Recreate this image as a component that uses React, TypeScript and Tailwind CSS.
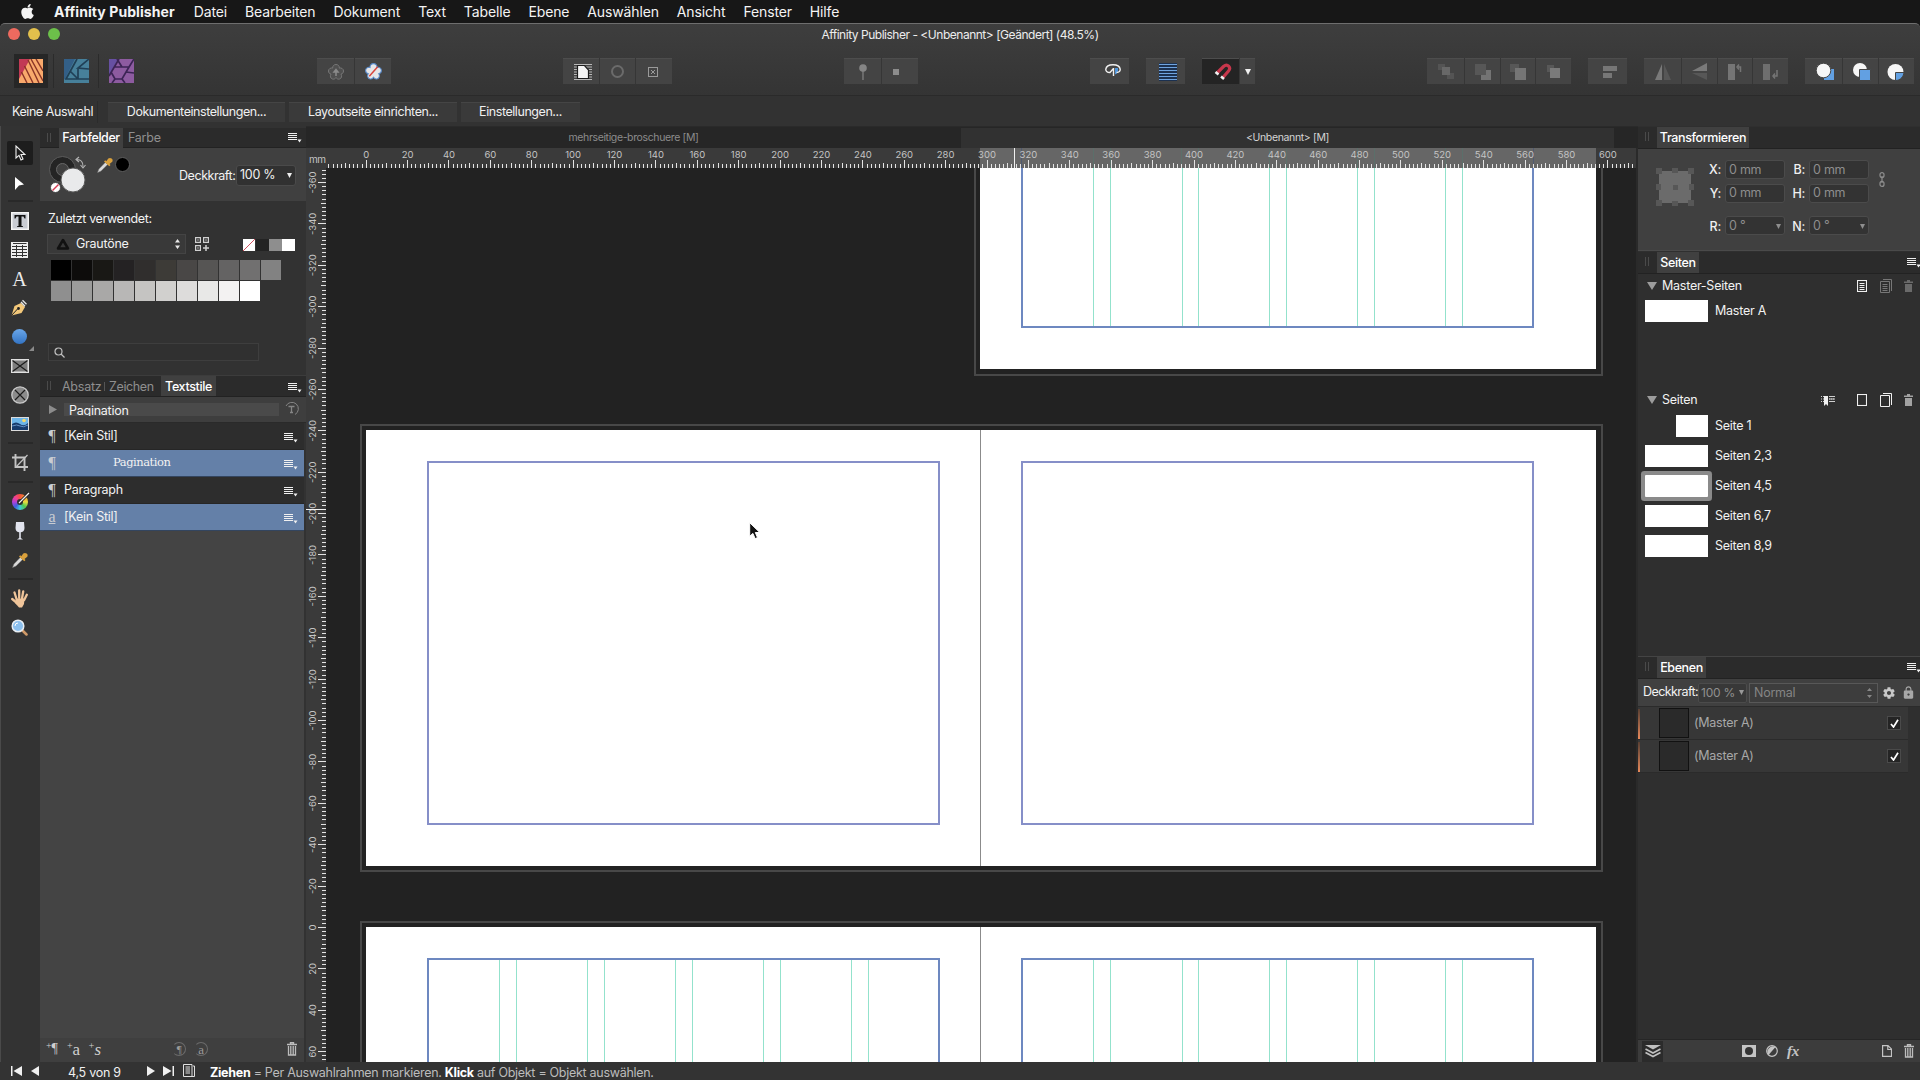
import type { ReactNode } from "react";
import { FaApple } from "react-icons/fa";
import { IoMdLock, IoMdSettings } from "react-icons/io";

const MENUS = ["Datei", "Bearbeiten", "Dokument", "Text", "Tabelle", "Ebene", "Auswählen", "Ansicht", "Fenster", "Hilfe"];

const GRAYS_TOP = ["#000000", "#0d0c0b", "#191815", "#242223", "#302e2d", "#3d3b37", "#494746", "#565554", "#646363", "#717070", "#828282"];
const GRAYS_BOTTOM = ["#8f8f8f", "#9c9c9b", "#a9a8a7", "#b8b7b6", "#c5c4c2", "#d1d0ce", "#dddcdb", "#e8e8e7", "#f3f2f2", "#ffffff"];

// px per 20 mm at the current zoom
const STEP = 41.39;

function MenuGlyph({ className = "" }: { className?: string }) {
  return (
    <svg className={className} width="14" height="11" viewBox="0 0 14 11">
      <path d="M0 1.5h9M0 3.5h9M0 5.5h9M0 7.5h9" stroke="#f0f0f0" />
      <path d="M9.5 7.5h4l-2 3z" fill="#f0f0f0" />
    </svg>
  );
}

function Grip() {
  return (
    <div className="ml-[7px] flex w-[12px] shrink-0 gap-[2px] self-start pt-[5px]">
      <div className="h-[9px] w-px bg-[#4a4a4a]" />
      <div className="h-[9px] w-px bg-[#4a4a4a]" />
    </div>
  );
}

function TrashGlyph({ color = "#bdbdbd" }: { color?: string }) {
  return (
    <svg width="10" height="14" viewBox="0 0 10 14" fill="none" stroke={color}>
      <path d="M0 2.5h10M3.5 2V.7h3V2" strokeWidth="1.4" />
      <path d="M1.5 4v9h7V4M3.8 4v8.5M6.2 4v8.5" strokeWidth="1.3" />
    </svg>
  );
}

function Dropper() {
  return (
    <svg width="16" height="16" viewBox="0 0 16 16">
      <path d="M.6 15.4 2 12l6.3-6.6 2.3 2.2L4 14z" fill="#d9d9d9" stroke="#8a8a8a" strokeWidth=".5" />
      <path d="m7 4.4 1.2-1.1 1.1.9 2-2.7Q13 .3 14.6 1.5t.7 3.2l-2.8 2.2 1 1.1-1.2 1.2z" fill="#d9a03c" />
    </svg>
  );
}

function ToolButton({ children, w, dark }: { children?: ReactNode; w: number; dark?: boolean }) {
  return (
    <div
      className={`flex h-[26px] items-center justify-center border-t border-[#4d4d4d] ${dark ? "bg-[#242424]" : "bg-[#444444]"}`}
      style={{ width: w }}
    >
      {children}
    </div>
  );
}

function ToolGroup({ children, ml }: { children: ReactNode; ml: number }) {
  return (
    <div className="flex shrink-0 gap-px bg-[#363636]" style={{ marginLeft: ml }}>
      {children}
    </div>
  );
}

function Personas() {
  return (
    <div className="flex w-[134px] shrink-0 items-center pl-[14px]">
      <div className="flex h-[34px] w-[34px] shrink-0 items-center justify-center bg-[#262626]">
        <svg width="24" height="24" viewBox="0 0 24 24">
          <rect width="24" height="24" fill="#f9a96c" />
          <path d="M0 0h11L0 20z" fill="#c23a55" />
          <path d="M9 1 20 24M5.5 7 14 24M2.5 13 8 24M12 0l12 22M17 0l7 12" stroke="#8a3526" strokeWidth="1.4" />
        </svg>
      </div>
      <div className="ml-[5px] h-[34px] w-px shrink-0 bg-[#2b2b2b]" />
      <svg className="ml-[10px] shrink-0" width="25" height="24" viewBox="0 0 25 24">
        <rect width="25" height="24" fill="#47809a" />
        <path d="M0 0h11L1 20H0z" fill="#335f87" />
        <path d="M13 0 2 20h23M6 12 14 20M25 0 14 9l11 1M14 9v11" stroke="#203f56" strokeWidth="1.7" fill="none" />
      </svg>
      <div className="ml-[9px] h-[34px] w-px shrink-0 bg-[#2b2b2b]" />
      <svg className="ml-[10px] shrink-0" width="25" height="24" viewBox="0 0 25 24">
        <rect width="25" height="24" fill="#8d5ba0" />
        <path d="M0 0h9L0 17z" fill="#6750a2" />
        <path d="M8 0l5 8M0 17 10 0M5 8h15L13 20H6L2 13M20 8l5-8M13 20l3 4M17 13l8 1M6 20l-3 4" stroke="#3c2455" strokeWidth="1.7" fill="none" />
      </svg>
    </div>
  );
}

function Cloud({ fill, stroke }: { fill: string; stroke: string }) {
  return (
    <path d="M10 1c2.300 0 3.600 1.800 3.300 3.600 2-.6 4.200.7 4.200 2.900 0 1.700-1 2.800-2.500 3.100 1.200 1.500.8 4.400-1.700 5-1.500.3-2.600-.4-3.300-1.600-.7 1.200-1.800 1.900-3.300 1.600-2.500-.6-2.900-3.500-1.700-5-1.500-.3-2.500-1.400-2.500-3.100 0-2.200 2.200-3.500 4.200-2.900C6.400 2.800 7.700 1 10 1z" fill={fill} stroke={stroke} />
  );
}

function Toolbar() {
  return (
    <div className="flex h-[52px] items-center border-b border-[#2a2a2a] pt-[3px]">
      <Personas />
      <ToolGroup ml={183}>
        <ToolButton w={37}>
          <svg width="20" height="20" viewBox="0 0 20 17">
            <Cloud fill="#505050" stroke="#777" />
            <path d="M10 12.500V7M8 8.500 10 6l2 2.500z" stroke="#8a8a8a" strokeWidth="1.500" />
          </svg>
        </ToolButton>
        <ToolButton w={36}>
          <svg width="21" height="21" viewBox="0 0 20 17">
            <Cloud fill="#e6e6e8" stroke="#5a8ccc" />
            <path d="M6 13 14 4" stroke="#d8443c" strokeWidth="1.400" />
          </svg>
        </ToolButton>
      </ToolGroup>
      <ToolGroup ml={172}>
        <ToolButton w={36}>
          <svg className="ml-[3px]" width="18" height="18" viewBox="0 0 18 18">
            <path d="M0 1.500h18M0 4h18M0 6.500h18M0 9h18M0 11.500h18M0 14h18M0 16.500h18" stroke="#b8b8b8" />
            <path d="M3.500 2.500h7l4 4.500v8.500h-11z" fill="#f4f4f4" stroke="#1c1c1c" strokeWidth="1.200" />
          </svg>
        </ToolButton>
        <ToolButton w={35}>
          <div className="h-[13px] w-[13px] rounded-full border-2 border-[#6b6b6b]" />
        </ToolButton>
        <ToolButton w={36}>
          <svg className="mr-[3px]" width="10" height="10" viewBox="0 0 10 10" fill="none" stroke="#9a9a9a">
            <rect x=".5" y=".5" width="9" height="9" />
            <path d="m3 3 4 4M7 3 3 7" />
          </svg>
        </ToolButton>
      </ToolGroup>
      <ToolGroup ml={172}>
        <ToolButton w={37}>
          <svg width="10" height="16" viewBox="0 0 10 16">
            <circle cx="5" cy="4" r="3.800" fill="#858585" />
            <path d="M5 7v9" stroke="#858585" strokeWidth="1.200" />
          </svg>
        </ToolButton>
        <ToolButton w={36}>
          <div className="mr-[8px] h-[6px] w-[6px] bg-[#8c8c8c]" />
        </ToolButton>
      </ToolGroup>
      <ToolGroup ml={172}>
        <ToolButton w={39}>
          <svg className="mb-[2px] ml-[6px]" width="16" height="13" viewBox="0 0 16 13" fill="none">
            <path d="M10 4v6.500c2.500-.5 3.500-3 3-6.500z" fill="#4c94dc" />
            <path d="M5 8.500C1.800 8.300.7 6.800.8 5.200 1.200 2.500 4 .8 8 .8s6.800 1.700 7.200 4.400c.1 1.600-1 3.100-3.700 3.300M4.500 9 8.500 4.500M8.500 4v8" stroke="#f0f0f0" strokeWidth="1.400" />
          </svg>
        </ToolButton>
      </ToolGroup>
      <ToolGroup ml={17}>
        <ToolButton w={39}>
          <svg className="ml-1" width="18" height="18" viewBox="0 0 18 18">
            <rect width="18" height="18" fill="#1c3150" />
            <path d="M0 1.500h18M0 4.500h18M0 7.500h18M0 10.500h18M0 13.500h18M0 16.500h18" stroke="#6fa4e0" strokeWidth="1.200" />
          </svg>
        </ToolButton>
      </ToolGroup>
      <ToolGroup ml={17}>
        <ToolButton w={37} dark>
          <svg className="ml-1" width="18" height="18" viewBox="0 0 18 18" fill="none">
            <path d="M3 10 9.500 3.500c4-3.500 8 1 5 4.500L8.500 15" stroke="#c7374c" strokeWidth="3.200" />
            <path d="m1.500 9 3 2.500M7 13.500l3 2.500" stroke="#f0f0f0" strokeWidth="2.500" />
          </svg>
        </ToolButton>
        <ToolButton w={15}>
          <svg width="6" height="6" viewBox="0 0 6 6">
            <path d="M0 0h6L3 6z" fill="#f0f0f0" />
          </svg>
        </ToolButton>
      </ToolGroup>
      <ToolGroup ml={172}>
        <ToolButton w={37}>
          <svg width="16" height="16" viewBox="0 0 16 16">
            <path d="M0 0h7v6H0zM9 9h7v6H9z" fill="#545454" />
            <path d="M4 3h8v8H4z" fill="#686868" />
          </svg>
        </ToolButton>
        <ToolButton w={35}>
          <svg width="16" height="16" viewBox="0 0 16 16">
            <path d="M6 6h10v10H6z" fill="#747474" />
            <path d="M0 0h11v11H0z" fill="#575757" />
          </svg>
        </ToolButton>
        <ToolButton w={34}>
          <svg width="16" height="16" viewBox="0 0 16 16">
            <path d="M0 0h9v8H0z" fill="#575757" />
            <path d="M5 4h11v12H5z" fill="#757575" />
          </svg>
        </ToolButton>
        <ToolButton w={35}>
          <svg width="14" height="14" viewBox="0 0 14 14">
            <path d="M0 0h7v7H0z" fill="#585858" />
            <path d="M3 3h10v10H3z" fill="#7a7a7a" />
          </svg>
        </ToolButton>
      </ToolGroup>
      <ToolGroup ml={17}>
        <ToolButton w={39}>
          <svg className="ml-1" width="14" height="14" viewBox="0 0 14 14" fill="#777">
            <path d="M0 1h14v5H0zM0 8h9v5H0z" />
          </svg>
        </ToolButton>
      </ToolGroup>
      <ToolGroup ml={17}>
        <ToolButton w={37}>
          <svg width="18" height="18" viewBox="0 0 18 18">
            <path d="M8 1v16H1z" fill="#7a7a7a" />
            <path d="M10 1v16h7z" fill="#575757" />
          </svg>
        </ToolButton>
        <ToolButton w={35}>
          <svg width="18" height="18" viewBox="0 0 18 18">
            <path d="M16 0v8H1z" fill="#7a7a7a" />
            <path d="M16 17v-7H1z" fill="#575757" />
          </svg>
        </ToolButton>
        <ToolButton w={34}>
          <svg width="16" height="18" viewBox="0 0 16 18">
            <path d="M1 1h7v16H1z" fill="#757575" />
            <path d="M13.500 9V4H11M12 1.500 10 4l2 2.500" stroke="#757575" strokeWidth="1.500" fill="none" />
          </svg>
        </ToolButton>
        <ToolButton w={35}>
          <svg width="16" height="18" viewBox="0 0 16 18">
            <path d="M0 1h7v16H0z" fill="#6e6e6e" />
            <path d="M14 7v6h-3M12 10.500 10 13l2 2.500" stroke="#757575" strokeWidth="1.500" fill="none" />
          </svg>
        </ToolButton>
      </ToolGroup>
      <ToolGroup ml={17}>
        <ToolButton w={37}>
          <svg className="ml-[2px]" width="18" height="17" viewBox="0 0 18 17">
            <path d="M8 6h10v11H8z" fill="#62a0e2" />
            <circle cx="7.500" cy="7.500" r="7.300" fill="#f6f6f6" stroke="#444" />
          </svg>
        </ToolButton>
        <ToolButton w={35}>
          <svg className="ml-[2px]" width="18" height="18" viewBox="0 0 18 18">
            <circle cx="7" cy="7" r="7" fill="#f6f6f6" />
            <path d="M6.500 6.500h11v11h-11z" fill="#62a0e2" stroke="#444" />
          </svg>
        </ToolButton>
        <ToolButton w={35}>
          <svg className="mr-[2px]" width="17" height="18" viewBox="0 0 17 18">
            <circle cx="8.500" cy="9" r="8" fill="#f6f6f6" />
            <path d="M8.500 9.500h8.500c-.500 4-3.500 8-8.500 8z" fill="#62a0e2" stroke="#444" />
          </svg>
        </ToolButton>
      </ToolGroup>
    </div>
  );
}

function ContextBar() {
  return (
    <div className="flex h-[30px] items-center bg-[#323232] pt-[2px] text-[12.500px] tracking-[-0.035em] text-[#f0f0f0]">
      <div className="w-[97px] pl-[12px] whitespace-nowrap">Keine Auswahl</div>
      <div className="h-[22px] w-px bg-[#2b2b2b]" />
      <div className="ml-[10px] flex gap-1">
        <div className="flex h-[20px] w-[177px] items-center justify-center border-t border-[#454545] bg-[#3a3a3a]">Dokumenteinstellungen...</div>
        <div className="flex h-[20px] w-[168px] items-center justify-center border-t border-[#454545] bg-[#3a3a3a]">Layoutseite einrichten...</div>
        <div className="flex h-[20px] w-[119px] items-center justify-center border-t border-[#454545] bg-[#3a3a3a]">Einstellungen...</div>
      </div>
    </div>
  );
}

function Cell({ children }: { children: ReactNode }) {
  return <div className="flex h-[29px] items-center justify-center">{children}</div>;
}

function Rule() {
  return <div className="my-1 ml-[7px] h-[2px] w-[25px] bg-[#292929]" />;
}

function ToolStrip() {
  return (
    <div className="flex w-[40px] shrink-0 flex-col border-l border-[#4a4a4a] bg-[#333333] pt-[15px] pr-[2px]">
      <div className="ml-[6px] flex h-[24px] w-[26px] items-center justify-center rounded-[2px] bg-[#1d1d1d]">
        <svg width="11" height="16" viewBox="0 0 11 16">
          <path d="M1 1v12l3-2.700 2 4.700 2-1-2-4.500h4z" fill="#1d1d1d" stroke="#f0f0f0" strokeWidth="1.100" />
        </svg>
      </div>
      <div className="flex h-[31px] items-center justify-center pt-[5px]">
        <svg width="9" height="13" viewBox="0 0 9 13">
          <path d="M0 0 9 7.500 4 8.500 0 13z" fill="#fff" />
        </svg>
      </div>
      <Rule />
      <Cell>
        <svg width="18" height="18" viewBox="0 0 18 18">
          <rect x=".75" y=".75" width="16.500" height="16.500" fill="#c9ccd3" stroke="#f5f5f5" strokeWidth="1.500" />
          <path d="M3.500 3h11v3.500h-1L12.500 4.500h-2V14l1.500.3V15H6v-.7l1.500-.3V4.500h-2l-1 2h-1z" fill="#111" />
        </svg>
      </Cell>
      <Cell>
        <svg width="17" height="16" viewBox="0 0 17 16">
          <path d="M0 0h17v16H0z" fill="#efefef" />
          <path d="M2 1.500h13.500" stroke="#333" />
          <path d="M1 4.500h15M1 7.500h15M1 10.500h15M1 13.500h15M5.500 3v12M11.500 3v12" stroke="#333" strokeWidth="1" />
        </svg>
      </Cell>
      <Cell>
        <span className="font-['Liberation_Serif',serif] text-[20px] text-[#ececec]">A</span>
      </Cell>
      <Cell>
        <svg width="17" height="17" viewBox="0 0 17 17">
          <path d="M.5 16.500 3.500 7 10 4l4 4-3.500 6z" fill="#f3c87a" />
          <path d="m.5 16.500 6-6.500" stroke="#222" />
          <circle cx="7.500" cy="9.500" r="1.400" fill="#222" />
          <path d="m10 3 4 4.200M11.500 1.200l4 4" stroke="#e6e6e6" strokeWidth="1.300" />
        </svg>
      </Cell>
      <div className="relative">
        <Cell>
          <div className="h-[15px] w-[15px] rounded-full bg-linear-to-b from-[#6aa7ea] to-[#3374c4]" />
        </Cell>
        <svg className="absolute right-[4px] bottom-0" width="5" height="5" viewBox="0 0 5 5">
          <path d="M5 0v5H0z" fill="#8a8a8a" />
        </svg>
      </div>
      <Cell>
        <svg width="18" height="14" viewBox="0 0 18 14" stroke="#e0e0e0">
          <rect x=".75" y=".75" width="16.500" height="12.500" fill="#7d7d7d" strokeWidth="1.500" />
          <path d="m1.500 1.500 15 11M16.500 1.500l-15 11" stroke="#1c1c1c" strokeWidth="1.200" />
        </svg>
      </Cell>
      <Cell>
        <svg width="18" height="18" viewBox="0 0 18 18">
          <circle cx="9" cy="9" r="8.200" fill="#8b8b8b" stroke="#c9c9c9" strokeWidth="1.300" />
          <path d="m4 4 10 10M14 4 4 14" stroke="#1c1c1c" strokeWidth="1.200" />
        </svg>
      </Cell>
      <Cell>
        <svg width="18" height="14" viewBox="0 0 18 14">
          <rect x=".5" y=".5" width="17" height="13" fill="#6cb4e8" stroke="#dcdcdc" />
          <path d="M1 7q4-3 8 0t8-1v7H1z" fill="#163a6c" />
          <path d="M1 9q5-2 8 0t8-1" stroke="#6691c4" fill="none" />
          <circle cx="13" cy="3.500" r="1.800" fill="#f3d86a" />
        </svg>
      </Cell>
      <Rule />
      <Cell>
        <svg width="16" height="17" viewBox="0 0 16 17" fill="none" stroke="#c4c4c4">
          <path d="M3.500 0v13H16M0 3.500h12.500V17" strokeWidth="1.900" />
          <path d="M4 13 15.500 1" strokeWidth="1.200" />
        </svg>
      </Cell>
      <Rule />
      <Cell>
        <div className="relative">
          <div className="flex h-[16px] w-[16px] items-center justify-center rounded-full bg-[conic-gradient(#f4503c,#f09a30,#e8e040,#50c850,#40c8d8,#4060e0,#b040d8,#f04090,#f4503c)]">
            <div className="h-[6px] w-[6px] rounded-full bg-[#333]" />
          </div>
          <svg className="absolute -top-[2px] left-[6px]" width="12" height="12" viewBox="0 0 12 12">
            <path d="M1 11 11 1" stroke="#222" strokeWidth="3" />
            <path d="M1 11 11 1" stroke="#f0f0f0" strokeWidth="1.300" />
          </svg>
        </div>
      </Cell>
      <Cell>
        <svg width="10" height="18" viewBox="0 0 10 18">
          <path d="M1 0h8l.5 6c0 3-2 4-3.700 4.300V16L8 17.500H2L4.200 16v-5.700C2.500 10 .5 9 .5 6z" fill="#e2e4ee" />
        </svg>
      </Cell>
      <Cell>
        <Dropper />
      </Cell>
      <Rule />
      <Cell>
        <svg width="18" height="19" viewBox="0 0 18 19" fill="none" stroke="#f0c59a" strokeLinecap="round">
          <path d="M5.500 10 3.500 3.500M8.200 9V1.500M11 9.500l1.200-7M13.200 11l2.600-5.200M6 14l-4.800-4" strokeWidth="2.300" />
          <path d="M5 9.500h8.500l-.5 5.500-2 3.500H8L4 14z" fill="#f0c59a" stroke="none" />
        </svg>
      </Cell>
      <Cell>
        <svg width="17" height="17" viewBox="0 0 17 17">
          <path d="m11.500 11.500 4 4" stroke="#d09a68" strokeWidth="2.500" strokeLinecap="round" />
          <circle cx="7" cy="7" r="5.800" fill="#8cc0ee" stroke="#e8eef4" strokeWidth="1.500" />
          <path d="M4 7a3 3 0 0 1 3-3" stroke="#fff" fill="none" />
        </svg>
      </Cell>
    </div>
  );
}

function StylesRow({ icon, label, blue, serif }: { icon: string; label: string; blue?: boolean; serif?: boolean }) {
  return (
    <div className={`flex h-[27px] items-center border-b ${blue ? "border-[#33455f] bg-[#6480a8]" : "border-[#262626] bg-[#2d2d2d]"}`}>
      <div className={`w-[24px] text-center font-['Liberation_Serif',serif] text-[16px] leading-none text-[#c9ccd2] ${icon === "a" ? "underline" : ""}`}>{icon}</div>
      <div className={`flex-1 text-[#f2f2f2] ${serif ? "pl-[49px] font-['DejaVu_Serif',serif] text-[11.500px] tracking-[-0.04em]" : "text-[12.500px] tracking-[-0.02em]"}`}>{label}</div>
      <MenuGlyph className="mt-[2px] mr-[6px]" />
    </div>
  );
}

function LeftPanel() {
  return (
    <div className="flex w-[266px] shrink-0 flex-col bg-[#323232] pt-[2px] text-[12.500px] tracking-[-0.02em]">
      <div className="flex h-[20px] shrink-0 items-center border-b border-[#222] bg-[#2b2b2b]">
        <Grip />
        <div className="flex h-[20px] w-[64px] items-center justify-center bg-[#404040] pt-[2px] font-medium tracking-[-0.035em] text-white">Farbfelder</div>
        <div className="ml-[5px] flex-1 pt-[2px] text-[#8f8f8f]">Farbe</div>
        <MenuGlyph className="mr-[4px]" />
      </div>
      <div className="flex h-[53px] shrink-0 items-start bg-[#404040]">
        <svg className="mt-[7px] ml-[8px]" width="40" height="40" viewBox="0 0 40 40">
          <circle cx="14.500" cy="14.500" r="9.500" fill="none" stroke="#242424" strokeWidth="6.500" />
          <circle cx="14.500" cy="14.500" r="13" fill="none" stroke="#5a5a5a" />
          <circle cx="14.500" cy="14.500" r="6" fill="none" stroke="#666" />
          <circle cx="25" cy="25" r="12" fill="#e9eaeb" stroke="#5a5a5a" />
          <circle cx="7.500" cy="32.500" r="5" fill="#fff" stroke="#444" />
          <path d="m4.500 35.500 6-6" stroke="#d43a52" strokeWidth="1.500" />
          <path d="M29 4.500q6 0 6 7M31 2l-3 2.500L31 7M32.500 10l2.500 3 2.500-3" stroke="#b5b5b5" fill="none" strokeWidth="1.100" />
        </svg>
        <div className="mt-[9px] ml-[9px]">
          <Dropper />
        </div>
        <div className="mt-[9px] ml-[2px] h-[15px] w-[15px] rounded-full border border-[#5c5c5c] bg-black" />
        <div className="mt-[19px] ml-[49px] w-[57px] tracking-[-0.035em] whitespace-nowrap text-[#f2f2f2]">Deckkraft:</div>
        <div className="mt-[17px] flex h-[21px] w-[60px] items-center justify-between rounded-[3px] border border-[#4a4a4a] bg-[#313131] px-[3px] whitespace-nowrap text-[#f2f2f2]">
          100 %
          <svg width="5" height="5" viewBox="0 0 5 5">
            <path d="M0 0h5L2.500 5z" fill="#eee" />
          </svg>
        </div>
      </div>
      <div className="h-[33px] pt-[9px] pl-[8px] tracking-[-0.03em] text-[#f2f2f2]">Zuletzt verwendet:</div>
      <div className="flex h-[20px] items-center pl-[7px]">
        <div className="flex h-[20px] w-[139px] items-center border border-[#444] bg-[#393939] pr-[5px] pl-[8px] text-[#f2f2f2]">
          <svg width="14" height="12" viewBox="0 0 14 12">
            <path d="M7 2 12 10.500H2z" fill="none" stroke="#111" strokeWidth="2.500" strokeLinejoin="round" />
          </svg>
          <span className="ml-[6px] flex-1 pt-px">Grautöne</span>
          <svg width="5" height="10" viewBox="0 0 5 10">
            <path d="M0 3.500h5L2.500 0zM0 6.500h5L2.500 10z" fill="#e8e8e8" />
          </svg>
        </div>
        <svg className="ml-[9px]" width="14" height="14" viewBox="0 0 14 14" fill="none" stroke="#d0d0d0">
          <path d="M.6.6h4.800v4.800H.6zM8.600.6h4.800v4.800H8.600zM.6 8.600h4.800v4.800H.6z" strokeWidth="1.200" />
          <path d="M2.500 3h1M10.500 3h1M2.500 11h1M8 11h6M11 8v6" strokeWidth="1.500" />
        </svg>
        <div className="mt-[2px] ml-[34px] flex h-[12px]">
          <svg width="13" height="12" viewBox="0 0 13 12">
            <path d="M0 0h12v12H0z" fill="#fff" />
            <path d="M0 12 12 0" stroke="#d05060" />
          </svg>
          <div className="w-[13px] bg-[#232323]" />
          <div className="w-[13px] bg-[#8e8e8e]" />
          <div className="w-[13px] bg-white" />
        </div>
      </div>
      <div className="mt-[6px] ml-[11px] flex gap-px">
        {GRAYS_TOP.map((c) => (
          <div key={c} className="h-[20px] w-[20px]" style={{ backgroundColor: c }} />
        ))}
      </div>
      <div className="mt-px ml-[11px] flex gap-px">
        {GRAYS_BOTTOM.map((c) => (
          <div key={c} className="h-[20px] w-[20px]" style={{ backgroundColor: c }} />
        ))}
      </div>
      <div className="mt-[42px] ml-[8px] flex h-[18px] w-[211px] items-center border border-[#3e3e3e] bg-[#303030] pl-[5px]">
        <svg width="11" height="11" viewBox="0 0 11 11" fill="none" stroke="#c0c0c0" strokeWidth="1.200">
          <circle cx="4.500" cy="4.500" r="3.500" />
          <path d="m7 7 3.500 3.500" />
        </svg>
      </div>

      <div className="mt-[14px] flex h-[22px] shrink-0 items-center border-t border-b border-t-[#3c3c3c] border-b-[#222] bg-[#2b2b2b] text-[#8f8f8f]">
        <Grip />
        <div className="ml-[3px] w-[40px] pt-[3px]">Absatz</div>
        <div className="ml-[2px] h-[9px] w-px bg-[#555]" />
        <div className="ml-[4px] w-[52px] pt-[3px] tracking-[-0.03em]">Zeichen</div>
        <div className="flex h-[20px] w-[55px] items-center justify-center bg-[#404040] pt-[3px] font-medium tracking-[-0.03em] text-white">Textstile</div>
        <div className="flex-1" />
        <MenuGlyph className="mt-[2px] mr-[4px]" />
      </div>
      <div className="flex h-[26px] shrink-0 items-center border-b border-[#2a2a2a] bg-[#3e3e3e]">
        <svg className="ml-[9px]" width="8" height="9" viewBox="0 0 8 9">
          <path d="M0 0l8 4.500L0 9z" fill="#8c8c8c" />
        </svg>
        <div className="ml-[7px] h-[13px] w-[215px] overflow-hidden bg-[#4a4a4a] pl-[5px] leading-[15px] text-[#f2f2f2]">Pagination</div>
        <svg className="ml-[5px]" width="15" height="15" viewBox="0 0 15 15" fill="none" stroke="#858585">
          <path d="M2 4a6.500 6.500 0 1 1 9 8.500" />
          <path d="M4.500 4.500h6M7.500 4.500v6M6 10.500h3" strokeWidth="1.300" />
        </svg>
      </div>
      <div className="border-r-2 border-[#323232]">
        <StylesRow icon="¶" label="[Kein Stil]" />
        <StylesRow icon="¶" label="Pagination" blue serif />
        <StylesRow icon="¶" label="Paragraph" />
        <StylesRow icon="a" label="[Kein Stil]" blue />
      </div>
      <div className="mr-[2px] flex-1 bg-[#444444]" />
      <div className="mr-[2px] flex h-[24px] shrink-0 items-center bg-[#3f3f3f] pb-[2px] pl-[6px] font-['Liberation_Serif',serif] leading-none text-[#cfcfcf]">
        <div className="flex w-[21px] text-[14px]">
          <span className="text-[10px] leading-[7px]">+</span>¶
        </div>
        <div className="flex w-[21px] text-[17px]">
          <span className="text-[10px] leading-[10px]">+</span>a
        </div>
        <div className="flex w-[84px] text-[17px] italic">
          <span className="text-[10px] leading-[10px]">+</span>s
        </div>
        <div className="flex h-[14px] w-[14px] items-center justify-center rounded-full border border-l-transparent border-[#6b6b6b] text-[11px] text-[#9a9a9a]">¶</div>
        <div className="ml-[8px] flex h-[14px] w-[14px] items-center justify-center rounded-full border border-l-transparent border-[#6b6b6b] text-[13px] text-[#9a9a9a]">a</div>
        <div className="flex-1" />
        <div className="mr-[7px]">
          <TrashGlyph />
        </div>
      </div>
    </div>
  );
}

function HorizontalRuler() {
  const x0 = 40.2;
  const ticks = Array.from({ length: 318 }, (_, i) => i - 9).filter((i) => x0 + (i * STEP) / 10 < 1308);
  return (
    <svg className="shrink-0" width="1310" height="20" viewBox="0 0 1310 20">
      <rect width="1310" height="20" fill="#3a3a3a" />
      <rect x="654" width="616" height="20" fill="#666666" />
      {[767, 784, 855, 872, 943, 960, 1031, 1048, 1119, 1136].map((x) => (
        <path key={x} d={`M${x + 0.5} 0v20`} stroke="#5b6f6a" />
      ))}
      <path d="M695.500 0v20M1207.500 0v20" stroke="#505a70" />
      {ticks.map((i) => {
        const x = Math.round(x0 + (i * STEP) / 10 - 0.5) + 0.5;
        return <path key={i} d={`M${x} 20v${i % 10 === 0 ? -8 : i % 5 === 0 ? -5 : -4}`} stroke="#e4e4e4" />;
      })}
      {Array.from({ length: 31 }, (_, i) => (
        <text key={i} x={x0 + i * STEP} y="10" textAnchor="middle" fontSize="9.500" fill="#c4c4c4">
          {i * 20}
        </text>
      ))}
      <path d="M688.500 0v20" stroke="#f0f0f0" />
    </svg>
  );
}

function VerticalRuler() {
  const y0 = 759.500;
  const labels = Array.from({ length: 22 }, (_, i) => i - 18);
  const ticks = Array.from({ length: 216 }, (_, i) => i - 183);
  return (
    <svg className="shrink-0" width="20" height="894" viewBox="0 0 20 894">
      <rect width="20" height="894" fill="#3a3a3a" />
      {ticks.map((i) => {
        const y = Math.round(y0 + (i * STEP) / 10 - 0.5) + 0.5;
        return <path key={i} d={`M20 ${y}h${i % 10 === 0 ? -8 : i % 5 === 0 ? -5 : -4}`} stroke="#e4e4e4" />;
      })}
      {labels.map((i) => {
        const y = y0 + i * STEP;
        return (
          <text key={i} x="0" y="0" transform={`translate(10 ${y}) rotate(-90)`} textAnchor="middle" fontSize="9.500" fill="#c4c4c4">
            {i * 20}
          </text>
        );
      })}
      <path d="M0 341.500h20" stroke="#f0f0f0" />
    </svg>
  );
}

// column guides, measured from inside the left edge of the margin frame
const LEFT_GUIDES = [70, 87, 158, 175, 246, 263, 334, 351, 422, 439];
const RIGHT_GUIDES = [70, 87, 159, 175, 246, 263, 334, 351, 422, 439];

function Guides({ xs }: { xs: number[] }) {
  return (
    <>
      {xs.map((x) => (
        <div key={x} className="absolute top-0 bottom-0 w-px bg-[#93e2cc]" style={{ left: x }} />
      ))}
    </>
  );
}

function Canvas() {
  return (
    <div className="relative h-[894px] w-[1310px] overflow-hidden bg-[#222222]">
      <div className="absolute -top-[20px] left-[648px] h-[228px] w-[629px] border-2 border-[#484848]" />
      <div className="absolute -top-[20px] left-[654px] h-[221px] w-[616px] bg-white">
        <div className="absolute top-0 left-[41px] h-[180px] w-[513px] border-2 border-t-0 border-[#6d88c0]">
          <Guides xs={RIGHT_GUIDES} />
        </div>
      </div>

      <div className="absolute top-[256px] left-[34px] h-[448px] w-[1243px] border-2 border-[#484848]" />
      <div className="absolute top-[262px] left-[40px] h-[436px] w-[1230px] bg-white">
        <div className="absolute top-[31px] left-[61px] h-[364px] w-[513px] border-2 border-[#868fc8]" />
        <div className="absolute top-0 left-[614px] h-full w-px bg-[#8b8b8b]" />
        <div className="absolute top-[31px] left-[655px] h-[364px] w-[513px] border-2 border-[#868fc8]" />
      </div>

      <div className="absolute top-[753px] left-[34px] h-[300px] w-[1243px] border-2 border-[#484848]" />
      <div className="absolute top-[759px] left-[40px] h-[300px] w-[1230px] bg-white">
        <div className="absolute top-[31px] left-[61px] h-[363px] w-[513px] border-2 border-[#6d88c0]">
          <Guides xs={LEFT_GUIDES} />
        </div>
        <div className="absolute top-0 left-[614px] h-full w-px bg-[#8b8b8b]" />
        <div className="absolute top-[31px] left-[655px] h-[363px] w-[513px] border-2 border-[#6d88c0]">
          <Guides xs={RIGHT_GUIDES} />
        </div>
      </div>

      <svg className="absolute top-[354px] left-[423px]" width="12" height="18" viewBox="0 0 12 18">
        <path d="M.7.7v13.600l3.200-2.900 2.200 5.200 2.400-1-2.200-5.100h4.500z" fill="#111" stroke="#fff" strokeWidth="1" />
      </svg>
    </div>
  );
}

function DocumentArea() {
  return (
    <div className="flex w-[1332px] shrink-0 flex-col bg-[#2a2a2a] pt-px">
      <div className="flex h-[21px] items-center bg-[#262626] text-[10.500px] tracking-[-0.035em]">
        <div className="w-[655px] text-center text-[#8c8c8c]">mehrseitige-broschuere [M]</div>
        <div className="flex h-[20px] w-[653px] items-center justify-center bg-[#313131] text-[#d6d6d6]">&lt;Unbenannt&gt; [M]</div>
      </div>
      <div className="flex">
        <div className="h-[20px] w-[20px] bg-[#3a3a3a] pt-[4px] pl-[3px] text-[10px] leading-[14px] tracking-[-0.04em] text-[#c4c4c4]">mm</div>
        <HorizontalRuler />
      </div>
      <div className="flex">
        <VerticalRuler />
        <Canvas />
      </div>
    </div>
  );
}

function TabBar({ label, w, menu = true }: { label: string; w: number; menu?: boolean }) {
  return (
    <div className="flex h-[22px] shrink-0 items-center border-b border-[#222] bg-[#2b2b2b]">
      <Grip />
      <div className="flex h-[21px] items-center justify-center bg-[#404040] pt-px font-medium tracking-[-0.03em] text-white" style={{ width: w }}>
        {label}
      </div>
      <div className="flex-1" />
      {menu && <MenuGlyph className="-mr-[1px]" />}
    </div>
  );
}

function Field({ label, value, arrow }: { label: string; value: string; arrow?: boolean }) {
  return (
    <div className="flex items-center">
      <div className="w-[24px] pt-[2px] pr-[4px] text-right font-medium text-[#f0f0f0]">{label}</div>
      <div className="flex h-[19px] w-[60px] items-center justify-between rounded-[3px] border border-[#4b4b4b] bg-[#333333] px-[3px] pt-px text-[#8e8e8e]">
        {value}
        {arrow && (
          <svg width="5" height="5" viewBox="0 0 5 5">
            <path d="M0 0h5L2.500 5z" fill="#8e8e8e" />
          </svg>
        )}
      </div>
    </div>
  );
}

function PageGlyph({ lines, color = "#f0f0f0" }: { lines?: boolean; color?: string }) {
  return (
    <svg width="10" height="12" viewBox="0 0 10 12" fill="none" stroke={color}>
      <rect x=".5" y=".5" width="9" height="11" strokeWidth="1.100" />
      {lines && <path d="M2.500 3.500h5M2.500 5.500h5M2.500 7.500h5M2.500 9.500h5" />}
    </svg>
  );
}

function PagesGlyph({ lines, color = "#f0f0f0" }: { lines?: boolean; color?: string }) {
  return (
    <svg width="12" height="14" viewBox="0 0 12 14" fill="none" stroke={color}>
      <path d="M.5 2.500h9v11h-9zM3 .500h8.500V12" />
      {lines && <path d="M2.500 5.500h5M2.500 7.500h5M2.500 9.500h5M2.500 11.500h5" />}
    </svg>
  );
}

function BinGlyph({ color }: { color: string }) {
  return (
    <svg width="9" height="12" viewBox="0 0 9 12" fill={color}>
      <path d="M0 1.500h3V0h3v1.500h3V3H0zM1 4h7v8H1z" />
    </svg>
  );
}

function SectionHead({ label, children }: { label: string; children: ReactNode }) {
  return (
    <div className="mb-[2px] flex h-[24px] items-center pl-[9px] text-[#f2f2f2]">
      <svg width="10" height="8" viewBox="0 0 10 8">
        <path d="M0 0h10L5 8z" fill="#9c9c9c" />
      </svg>
      <div className="ml-[5px] flex-1">{label}</div>
      {children}
    </div>
  );
}

const PAGES = ["Seite 1", "Seiten 2,3", "Seiten 4,5", "Seiten 6,7", "Seiten 8,9"];

function LayerRow() {
  return (
    <div className="mr-[12px] flex h-[33px] shrink-0 items-center border-b border-[#2b2b2b] bg-[#373737]">
      <div className="h-[30px] w-[2px] self-end bg-linear-to-b from-[#5a4033] to-[#e8895a]" />
      <div className="ml-[19px] h-[30px] w-[30px] border border-[#111] bg-[#2a2a2a]" />
      <div className="ml-[5px] flex-1 text-[#a8a8a8]">(Master A)</div>
      <div className="mr-[7px] flex h-[14px] w-[14px] items-center justify-center border border-[#4a4a4a] bg-[#242424]">
        <svg width="9" height="9" viewBox="0 0 9 9">
          <path d="m1 5 2.500 3L8 .700" stroke="#fff" strokeWidth="1.700" fill="none" />
        </svg>
      </div>
    </div>
  );
}

function RightPanel() {
  return (
    <div className="flex w-[282px] shrink-0 flex-col overflow-hidden bg-[#2f2f2f] pt-px text-[12.500px] tracking-[-0.02em]">
      <TabBar label="Transformieren" w={92} menu={false} />
      <div className="flex h-[101px] shrink-0 bg-[#404040] pt-[10px]">
        <svg className="mt-[9px] ml-[18px] shrink-0" width="38" height="38" viewBox="0 0 38 38">
          <rect x="3" y="3" width="32" height="32" fill="#6b6b6b" />
          <path d="M0 0h6v6H0zM16 0h6v5h-6zM32 0h6v6h-6zM0 16h5v6H0zM33 16h5v6h-5zM0 32h6v6H0zM16 33h6v5h-6zM32 32h6v6h-6zM17 17h5v5h-5z" fill="#575757" />
        </svg>
        <div className="ml-[7px] flex flex-col gap-[3px]">
          <div className="flex">
            <Field label="X:" value="0 mm" />
            <Field label="B:" value="0 mm" />
          </div>
          <div className="flex">
            <Field label="Y:" value="0 mm" />
            <Field label="H:" value="0 mm" />
          </div>
          <div className="mt-[9px] flex">
            <Field label="R:" value="0 °" arrow />
            <Field label="N:" value="0 °" arrow />
          </div>
        </div>
        <svg className="mt-[13px] ml-[10px]" width="6" height="15" viewBox="0 0 6 15" fill="none" stroke="#8e8e8e" strokeWidth="1.200">
          <rect x="1" y=".6" width="4" height="5" rx="2" />
          <rect x="1" y="9.400" width="4" height="5" rx="2" />
          <path d="M3 4v7" />
        </svg>
      </div>

      <div className="h-[2px] shrink-0 border-t border-[#4a4a4a]" />
      <TabBar label="Seiten" w={42} />
      <div className="flex h-[382px] shrink-0 flex-col">
        <SectionHead label="Master-Seiten">
          <div className="mr-[7px] flex items-center">
            <PageGlyph lines />
            <div className="mr-[12px] ml-[13px]">
              <PagesGlyph lines color="#777" />
            </div>
            <BinGlyph color="#6a6a6a" />
          </div>
        </SectionHead>
        <div className="flex h-[22px] items-center pl-[7px] text-[#f2f2f2]">
          <div className="mr-[7px] h-[22px] w-[63px] bg-white" />
          <span className="pt-px">Master A</span>
        </div>
        <div className="h-[66px]" />
        <SectionHead label="Seiten">
          <div className="mr-[7px] flex items-center">
            <svg className="mr-[22px]" width="14" height="11" viewBox="0 0 14 11">
              <path d="M0 1.500h14M0 4h14M0 6.500h14" stroke="#d0d0d0" strokeDasharray="1 1" />
              <path d="M8 1.500h6M8 4h6M8 6.500h6" stroke="#d0d0d0" />
              <path d="M3 1h4v10L5 9l-2 2z" fill="#f0f0f0" />
            </svg>
            <PageGlyph />
            <div className="mr-[12px] ml-[13px]">
              <PagesGlyph />
            </div>
            <BinGlyph color="#a2a2a2" />
          </div>
        </SectionHead>
        <div className="mt-px flex flex-col gap-[8px] pl-[7px] text-[#f2f2f2]">
          {PAGES.map((p, i) => (
            <div key={p} className="flex h-[22px] items-center">
              <div className="mr-[7px] flex w-[63px] justify-end">
                <div className={`h-[22px] bg-white ${i === 0 ? "w-[32px]" : "w-[63px]"} ${i === 2 ? "rounded-[1px] ring-4 ring-[#8a8a8a]" : ""}`} />
              </div>
              <span className="pt-px">{p}</span>
            </div>
          ))}
        </div>
      </div>

      <div className="h-px shrink-0 bg-[#444]" />
      <TabBar label="Ebenen" w={49} />
      <div className="flex h-[28px] shrink-0 items-center border-b border-[#2b2b2b] bg-[#404040] pl-[5px] whitespace-nowrap text-[#f2f2f2]">
        <div className="w-[55px] tracking-[-0.045em]">Deckkraft:</div>
        <div className="flex h-[20px] w-[49px] items-center justify-between rounded-[2px] border border-[#4b4b4b] bg-[#383838] px-[2px] text-[12px] tracking-[-0.02em] text-[#909090]">
          100 %
          <svg width="5" height="5" viewBox="0 0 5 5">
            <path d="M0 0h5L2.500 5z" fill="#999" />
          </svg>
        </div>
        <div className="ml-[2px] flex h-[20px] w-[129px] items-center justify-between border border-[#585858] bg-[#3d3d3d] pt-px pr-[5px] pl-[4px] text-[#858585]">
          Normal
          <svg width="5" height="10" viewBox="0 0 5 10">
            <path d="M0 3h5L2.500 0zM0 7h5L2.500 10z" fill="#888" />
          </svg>
        </div>
        <IoMdSettings className="ml-[4px] text-[#c8c8c8]" size={14} />
        <IoMdLock className="ml-[5px] text-[#a8a8a8]" size={15} />
      </div>
      <LayerRow />
      <LayerRow />
      <div className="flex-1" />
      <div className="flex h-[23px] shrink-0 items-center border-t border-[#262626] bg-[#3c3c3c] pl-[4px]">
        <div className="flex h-[21px] w-[21px] items-center justify-center bg-[#2b2b2b]">
          <svg width="16" height="13" viewBox="0 0 16 13">
            <path d="M0 0h16L8 4.500z" fill="#c0c0c0" />
            <path d="m.5 4 7.500 4 7.500-4M.5 7.500l7.500 4 7.500-4" stroke="#c0c0c0" strokeWidth="1.700" fill="none" />
          </svg>
        </div>
        <svg className="ml-[79px]" width="14" height="12" viewBox="0 0 14 12">
          <path d="M0 0h14v12H0z" fill="#c4c4c4" />
          <circle cx="7" cy="6" r="4" fill="#333" />
        </svg>
        <svg className="ml-[10px]" width="12" height="12" viewBox="0 0 12 12">
          <circle cx="6" cy="6" r="5.300" fill="none" stroke="#c4c4c4" strokeWidth="1.200" />
          <path d="M9.500 2A5.500 5.500 0 0 0 2.500 10z" fill="#c4c4c4" />
        </svg>
        <div className="ml-[9px] w-[14px] font-['Liberation_Serif',serif] text-[15px] leading-none font-bold text-[#c4c4c4] italic">fx</div>
        <div className="flex-1" />
        <svg width="10" height="12" viewBox="0 0 10 12" fill="none" stroke="#c4c4c4">
          <path d="M.6.600h5.400l3.500 3.600v7.200H.6zM5.800.600v3.900h3.700" strokeWidth="1.200" />
        </svg>
        <div className="mr-[6px] ml-[12px]">
          <TrashGlyph />
        </div>
      </div>
    </div>
  );
}

function StatusBar() {
  return (
    <div className="flex h-[18px] items-center bg-[#333333] pt-[5px] pl-[11px] text-[12.500px] leading-none whitespace-nowrap text-[#bcbcbc]">
      <svg className="-mt-[6px]" width="11" height="10" viewBox="0 0 11 10" fill="#f0f0f0">
        <path d="M0 0h1.500v10H0zM11 0v10L2.500 5z" />
      </svg>
      <svg className="-mt-[6px] ml-[9px]" width="8" height="10" viewBox="0 0 8 10" fill="#f0f0f0">
        <path d="M8 0v10L0 5z" />
      </svg>
      <div className="ml-[29px] w-[79px] tracking-[-0.02em] text-[#f0f0f0]">4,5 von 9</div>
      <svg className="-mt-[6px]" width="8" height="10" viewBox="0 0 8 10" fill="#f0f0f0">
        <path d="M0 0v10l8-5z" />
      </svg>
      <svg className="-mt-[6px] ml-[8px]" width="11" height="10" viewBox="0 0 11 10" fill="#f0f0f0">
        <path d="M9.500 0H11v10H9.500zM0 0v10l8.500-5z" />
      </svg>
      <svg className="-mt-[6px] ml-[9px]" width="12" height="13" viewBox="0 0 12 13" fill="none" stroke="#e0e0e0">
        <path d="M.5.500h8.500v12H.5zM10 2h1.500v10.500H9M2.500 3h4.500M2.500 5h4.500M2.500 7h4.500M2.500 9h4.500" />
      </svg>
      <div className="ml-[15px] tracking-[-0.023em]">
        <b className="text-white">Ziehen</b> = Per Auswahlrahmen markieren. <b className="text-white">Klick</b> auf Objekt = Objekt auswählen.
      </div>
    </div>
  );
}

export default function App() {
  return (
    <div className="flex h-[1080px] w-[1920px] flex-col overflow-hidden bg-[#171717] font-['Inter',sans-serif] select-none">
      <div className="flex h-[23px] shrink-0 items-center gap-[18px] pl-[19px] text-[14px] tracking-[-0.01em] text-[#f4f4f4]">
        <FaApple className="mb-[1px]" size={17} />
        <span className="mr-[1px] font-bold tracking-[0.006em]">Affinity Publisher</span>
        {MENUS.map((m) => (
          <span key={m}>{m}</span>
        ))}
      </div>
      <div className="h-[73px] shrink-0 rounded-t-[5px] border-t border-[#6e6e6e] bg-linear-to-b from-[#3e3e3e] to-[#343434]">
        <div className="relative flex h-[20px] items-center justify-center text-[12px] tracking-[-0.04em] text-[#ededed]">
          <div className="absolute left-[8px] flex gap-2">
            <div className="h-[12px] w-[12px] rounded-full bg-[#ee6a5f]" />
            <div className="h-[12px] w-[12px] rounded-full bg-[#e3c04c]" />
            <div className="h-[12px] w-[12px] rounded-full bg-[#6cc04a]" />
          </div>
          <span className="pt-px">Affinity Publisher - &lt;Unbenannt&gt; [Geändert] (48.5%)</span>
        </div>
        <Toolbar />
      </div>
      <ContextBar />
      <div className="flex h-[936px] shrink-0 bg-[#333]">
        <ToolStrip />
        <LeftPanel />
        <DocumentArea />
        <RightPanel />
      </div>
      <StatusBar />
    </div>
  );
}
